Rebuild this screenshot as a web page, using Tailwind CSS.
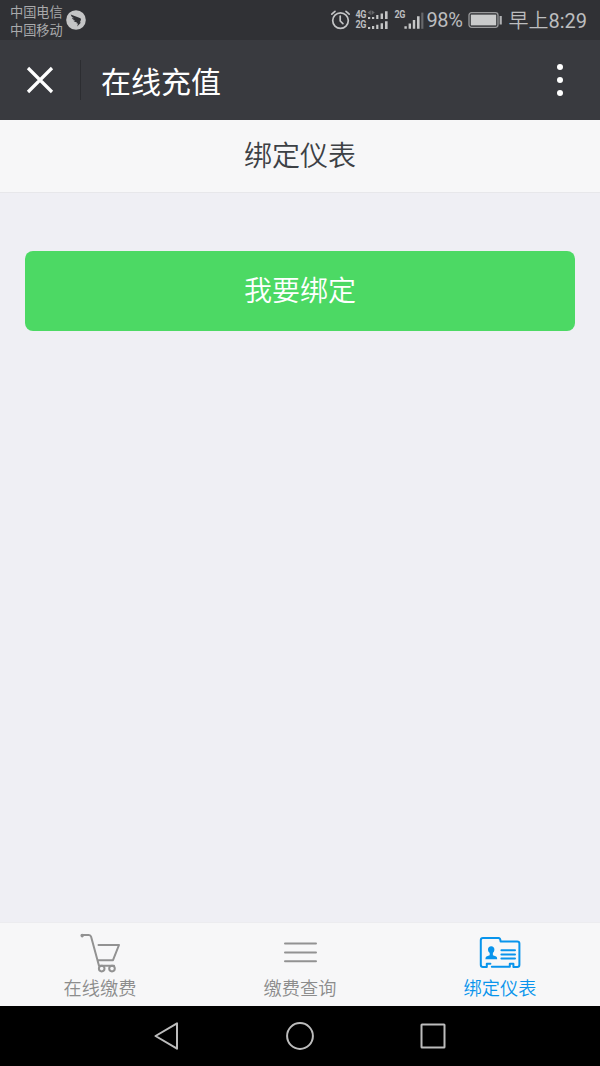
<!DOCTYPE html>
<html lang="zh-CN">

<head>
    <meta charset="UTF-8">
    <meta name="viewport" content="width=device-width, initial-scale=1.0">
    <title>在线充值</title>
    <script src="https://cdn.jsdelivr.net/npm/@tailwindcss/browser@4"></script>
</head>

<body class="bg-[#efeff4] font-[Roboto,'Noto_Sans_CJK_SC',sans-serif]">

    <div class="flex flex-col w-[600px] h-[1066px] overflow-hidden">
        <!-- Status bar -->
        <div class="flex items-center justify-between h-10 shrink-0 bg-[#303135] text-[#bcbdbf] pl-[10px] pr-[13px]">
            <div class="flex items-center gap-[3px]">
                <div class="text-[13.2px] leading-[18px] text-[#a9aaac] pt-[3px]">
                    <p>中国电信</p>
                    <p>中国移动</p>
                </div>
                <svg class="w-5 h-5" viewBox="0 0 20 20">
                    <circle cx="10" cy="10" r="9.8" fill="#c4c5c6" />
                    <path d="M4.7 4.5L14.5 8.2Q15.3 9 14.8 10.2L13.8 12.4H15L11.2 16.4L12 13.6H10.6L11 12.4Q8.4 12.2 7.3 10.8L9.3 10.6Q6.6 9.8 5.8 8L8 8.2Q5 6.8 4.7 4.5Z" fill="#303135" />
                </svg>
            </div>
            <div class="flex items-center">
                <svg class="w-[22px] h-[22px]" viewBox="0 0 22 22" fill="none" stroke="#c4c5c6" stroke-width="1.7" stroke-linecap="round">
                    <circle cx="10.5" cy="11.6" r="7.8" />
                    <path d="M10.2 7V12L12.9 14.6M1.8 5.2L5 2.4M19.2 5.2L16 2.4" />
                </svg>
                <!-- Dual SIM signal -->
                <div class="flex items-center ml-[3px] w-[71px] h-6">
                    <div class="flex flex-col gap-[3px] w-[12px] text-[9px] leading-[7px] font-bold tracking-[-0.4px]">
                        <span class="scale-y-115">4G</span>
                        <span class="scale-y-115">2G</span>
                    </div>
                    <svg class="w-[22px] h-6" viewBox="0 0 22 24" fill="#c4c5c6">
                        <path d="M1 8.9h2.2v2.1H1zM5 8.9h2.2v2.1H5zM9.2 7h2.2v4H9.2zM13.6 5.4h2.4v5.6h-2.4zM18 3.2h2.6v7.8H18z" />
                        <path d="M1 18.9h2.2v2.1H1zM5 18.1h2.2v2.9H5zM9.2 16.8h2.2v4.2H9.2zM13.6 15.2h2.4v5.8h-2.4zM18 13.2h2.6v7.8H18z" />
                        <path d="M.6 4.6l3.2-2.3v4.6zM7.8 4.6L4.6 2.3v4.6z" fill="#66676a" />
                    </svg>
                    <span class="self-start w-[10px] ml-[5px] mt-[2px] text-[9px] leading-[10px] font-bold tracking-[-0.4px] scale-y-115">2G</span>
                    <svg class="w-[20px] h-6" viewBox="0 0 20 24" fill="#c4c5c6">
                        <path d="M.4 18.2h2.4v2.6H.4zM4.6 15.5H7v5.3H4.6zM8.8 12h2.4v8.8H8.8zM13 8.2h2.6v12.6H13z" />
                        <path d="M17.2 4.6h2.2v16.2h-2.2z" fill="#66676a" />
                    </svg>
                </div>
                <span class="text-[20px] leading-6 w-[36px] whitespace-nowrap tracking-[-0.3px]">98%</span>
                <svg class="w-[34px] h-[18px] ml-[6px]" viewBox="0 0 34 18">
                    <rect x="1" y="1.7" width="29" height="14.6" rx="2.5" fill="none" stroke="#98999b" stroke-width="1.3" />
                    <rect x="2.8" y="3.6" width="25.4" height="10.8" fill="#c9cacb" />
                    <rect x="31.6" y="5" width="2.2" height="8.5" fill="#b0b1b3" />
                </svg>
                <span class="text-[20px] leading-6 ml-[6px] pt-[2px] font-[350]">早上<span class="font-normal">8:29</span></span>
            </div>
        </div>

        <!-- App bar -->
        <div class="flex items-center h-20 shrink-0 bg-[#393a3f] text-white pl-[26px] pr-[37px]">
            <svg class="w-7 h-7" viewBox="0 0 28 28" fill="none" stroke="#fff" stroke-width="3.2">
                <path d="M2 2L26 26M26 2L2 26" />
            </svg>
            <div class="w-px h-10 ml-[26px] bg-[#2c2d31]"></div>
            <h1 class="text-[30px] leading-10 ml-5 pt-1.5">在线充值</h1>
            <div class="flex flex-col gap-[7px] ml-auto">
                <i class="w-1.5 h-1.5 rounded-full bg-white"></i>
                <i class="w-1.5 h-1.5 rounded-full bg-white"></i>
                <i class="w-1.5 h-1.5 rounded-full bg-white"></i>
            </div>
        </div>

        <!-- Page title -->
        <h2 class="flex items-center justify-center h-[73px] shrink-0 bg-[#f7f7f8] border-b border-[#e7e7ea] text-[28px] font-[350] text-[#3d4145] pt-[2px]">绑定仪表</h2>

        <!-- Content -->
        <div class="flex-1 px-[25px] pt-[58.4px]">
            <button class="w-full h-20 rounded-lg bg-[#4cd964] text-white text-[28px] font-[350] pt-px">我要绑定</button>
        </div>

        <!-- Tab bar -->
        <div class="grid grid-cols-3 h-[84px] shrink-0 bg-[#f7f7f8] border-t border-[#ececef] text-[18.2px] font-[350] text-[#8c8c8c]">
            <a class="flex flex-col items-center pt-2">
                <svg class="w-11 h-11" viewBox="0 0 44 44" fill="none" stroke="#929292" stroke-width="2" stroke-linecap="round" stroke-linejoin="round">
                    <path d="M4 5.2V4H10.8Q12.6 4 13.1 5.8L21 34.8M20.5 14H41L35 29.2H19.7M21 34.8H36" />
                    <circle cx="4.2" cy="4.6" r="0.8" />
                    <circle cx="23.7" cy="37.6" r="2.8" />
                    <circle cx="34" cy="37.6" r="2.8" />
                </svg>
                <span class="leading-6 pt-[2px]">在线缴费</span>
            </a>
            <a class="flex flex-col items-center pt-2">
                <svg class="w-11 h-11" viewBox="0 0 44 44" fill="none" stroke="#929292" stroke-width="2" stroke-linecap="round">
                    <path d="M7 12.5H38M7 21.5H38M7 30.3H38" />
                </svg>
                <span class="leading-6 pt-[2px]">缴费查询</span>
            </a>
            <a class="flex flex-col items-center pt-2 text-[#0894ec]">
                <svg class="w-11 h-11" viewBox="0 0 44 44" fill="none" stroke="#0894ec" stroke-width="2" stroke-linecap="round" stroke-linejoin="round">
                    <path d="M8.8 36H5Q2.8 36 2.8 33.8V9.2Q2.8 7 5 7H20.4Q22.4 7 22.6 10.4H39.2Q41.4 10.4 41.4 12.6V33.8Q41.4 36 39.2 36H35.4V32.8H31.8V35.8H13.8M8.8 36V32.8H12.4" />
                    <path d="M23.4 19.3H37M23.4 23.5H37M23.4 27.6H37" />
                    <path d="M13.2 15.2C15.2 15.2 16.5 16.6 16.4 18.6C16.3 20.4 15.6 21.3 14.9 22.1V24.2L18.2 25.6Q19.2 26.2 19.2 28.2H7.4Q7.4 26.2 8.4 25.6L11.7 24.2V22.1C10.8 21.3 10.1 20.4 10 18.6C9.9 16.6 11.2 15.2 13.2 15.2Z" fill="#0894ec" stroke="none" />
                </svg>
                <span class="leading-6 pt-[2px]">绑定仪表</span>
            </a>
        </div>

        <!-- Android navigation -->
        <div class="flex items-center justify-between h-[60px] shrink-0 bg-black px-[153px]">
            <svg class="w-7 h-7" viewBox="0 0 28 28" fill="none" stroke="#bcbcbc" stroke-width="2" stroke-linejoin="round">
                <path d="M2.5 14L24 1.3V26.7Z" />
            </svg>
            <svg class="w-7 h-7" viewBox="0 0 28 28" fill="none" stroke="#bcbcbc" stroke-width="2">
                <circle cx="14" cy="14" r="12.9" />
            </svg>
            <svg class="w-7 h-7" viewBox="0 0 28 28" fill="none" stroke="#bcbcbc" stroke-width="2">
                <rect x="2.5" y="2.5" width="23" height="23" rx="0.5" />
            </svg>
        </div>
    </div>

</body>

</html>
